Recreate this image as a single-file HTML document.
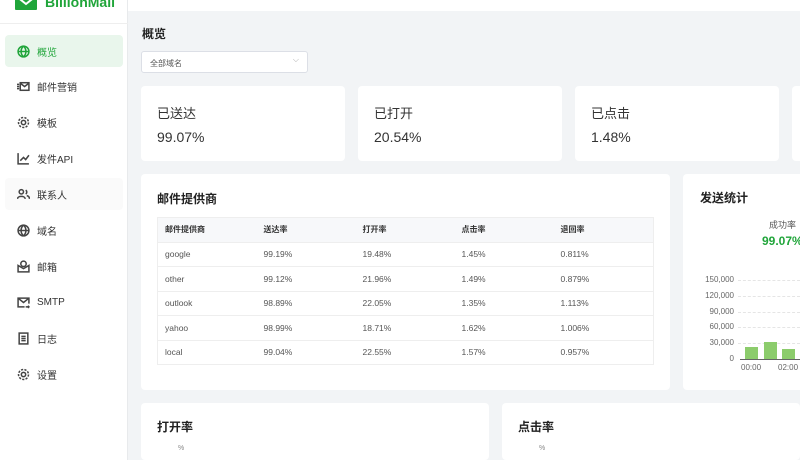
<!DOCTYPE html>
<html><head><meta charset="utf-8"><style>
*{box-sizing:border-box;margin:0;padding:0}
html,body{width:800px;height:460px;overflow:hidden}
body{background:#f2f4f6;font-family:"Liberation Sans","Noto Sans CJK SC",sans-serif;color:#333;position:relative}
.abs{position:absolute}
.side{left:0;top:0;width:128px;height:460px;background:#fff;border-right:1px solid #e8eaec}
.logo{left:15px;top:-6px;font-size:14px;font-weight:bold;color:#20a53a}
.nav{left:5px;width:118px;height:32px;border-radius:4px;font-size:10px;color:#333;display:flex;align-items:center;padding-left:12px}
.nav svg{width:13px;height:13px;margin-right:7px;stroke:#444;fill:none;stroke-width:1.4}
.card{background:#fff;border-radius:4px}
.t{font-size:12px;font-weight:bold;color:#222}
table{border-collapse:collapse;font-size:8.5px;color:#555}
td,th{text-align:left;height:24.5px;padding-left:7px;font-weight:normal;border-bottom:1px solid #eee}
th{background:#f7f8fa;color:#333;font-weight:bold;font-size:8px}
.yl{font-size:8px;color:#666;text-align:right;width:50px;left:684px}
.gl{left:738px;width:62px;border-top:1px dashed #e5e5e5}
</style></head><body>
<div class="abs" style="left:128px;top:0;width:672px;height:11px;background:#fff"></div>
<div class="abs side"></div>
<div class="abs" style="left:0;top:23px;width:128px;border-top:1px solid #eee"></div>
<svg class="abs" style="left:15px;top:-6px" width="22" height="16" viewBox="0 0 22 16"><rect x="0" y="0" width="22" height="16" rx="1" fill="#20a53a"/><path d="M1 2 L11 10 L21 2" stroke="#fff" stroke-width="2" fill="none"/></svg>
<div class="abs logo" style="left:45px">BillionMail</div>
<div class="abs nav" style="top:35px;background:#e9f6ec;color:#20a53a"><svg viewBox="0 0 12 12" style="stroke:#20a53a"><circle cx="6" cy="6" r="5"/><path d="M1 6h10M6 1c-3 3-3 7 0 10M6 1c3 3 3 7 0 10"/></svg>概览</div>
<div class="abs nav" style="top:70px"><svg viewBox="0 0 12 12"><rect x="3" y="2.5" width="8" height="7"/><path d="M3 3l4 3 4-3M0 4h2M0 6h2M0 8h2"/></svg>邮件营销</div>
<div class="abs nav" style="top:106px"><svg viewBox="0 0 12 12"><circle cx="6" cy="6" r="2"/><circle cx="6" cy="6" r="4.6" stroke-dasharray="2 1.2"/></svg>模板</div>
<div class="abs nav" style="top:142px"><svg viewBox="0 0 12 12"><path d="M1 1v10h10M3 8l3-3 2 2 3-4"/></svg>发件API</div>
<div class="abs nav" style="top:178px;background:#fafafa"><svg viewBox="0 0 12 12"><circle cx="4" cy="3.5" r="2"/><path d="M0.5 10c0-3 7-3 7 0M8 2a2 2 0 010 3.5M9 7c2 .5 2.5 1.5 2.5 3"/></svg>联系人</div>
<div class="abs nav" style="top:214px"><svg viewBox="0 0 12 12"><circle cx="6" cy="6" r="5"/><path d="M1 6h10M6 1c-3 3-3 7 0 10M6 1c3 3 3 7 0 10"/></svg>域名</div>
<div class="abs nav" style="top:250px"><svg viewBox="0 0 12 12"><path d="M1 5v6h10V5l-5 3z"/><circle cx="6" cy="3.5" r="2.5"/></svg>邮箱</div>
<div class="abs nav" style="top:286px"><svg viewBox="0 0 12 12"><path d="M7 10H1V2h10v5M1 2l5 4 5-4M8 10h3M10 9l1 1-1 1"/></svg>SMTP</div>
<div class="abs nav" style="top:322px"><svg viewBox="0 0 12 12"><rect x="2" y="1" width="8" height="10"/><path d="M4 4h4M4 6h4M4 8h4"/></svg>日志</div>
<div class="abs nav" style="top:358px"><svg viewBox="0 0 12 12"><circle cx="6" cy="6" r="2"/><circle cx="6" cy="6" r="4.6" stroke-dasharray="2 1.2"/></svg>设置</div>

<div class="abs t" style="left:142px;top:25px">概览</div>
<div class="abs" style="left:141px;top:51px;width:167px;height:22px;background:#fff;border:1px solid #dcdfe6;border-radius:3px;font-size:8px;color:#555;padding:6px 0 0 8px">全部域名<span class="abs" style="right:8px;top:3px;color:#aaa">⌵</span></div>

<div class="abs card" style="left:141px;top:86px;width:204px;height:75px"><div class="abs" style="left:16px;top:17px;font-size:13px">已送达</div><div class="abs" style="left:16px;top:43px;font-size:14px">99.07%</div></div>
<div class="abs card" style="left:358px;top:86px;width:204px;height:75px"><div class="abs" style="left:16px;top:17px;font-size:13px">已打开</div><div class="abs" style="left:16px;top:43px;font-size:14px">20.54%</div></div>
<div class="abs card" style="left:575px;top:86px;width:204px;height:75px"><div class="abs" style="left:16px;top:17px;font-size:13px">已点击</div><div class="abs" style="left:16px;top:43px;font-size:14px">1.48%</div></div>
<div class="abs card" style="left:792px;top:86px;width:20px;height:75px"></div>

<div class="abs card" style="left:141px;top:174px;width:529px;height:216px">
<div class="abs t" style="left:16px;top:16px">邮件提供商</div>
<table class="abs" style="left:16px;top:43px;width:497px;border:1px solid #eee">
<tr><th style="width:99px">邮件提供商</th><th style="width:99px">送达率</th><th style="width:99px">打开率</th><th style="width:99px">点击率</th><th>退回率</th></tr>
<tr><td>google</td><td>99.19%</td><td>19.48%</td><td>1.45%</td><td>0.811%</td></tr>
<tr><td>other</td><td>99.12%</td><td>21.96%</td><td>1.49%</td><td>0.879%</td></tr>
<tr><td>outlook</td><td>98.89%</td><td>22.05%</td><td>1.35%</td><td>1.113%</td></tr>
<tr><td>yahoo</td><td>98.99%</td><td>18.71%</td><td>1.62%</td><td>1.006%</td></tr>
<tr><td>local</td><td>99.04%</td><td>22.55%</td><td>1.57%</td><td>0.957%</td></tr>
</table></div>

<div class="abs card" style="left:683px;top:174px;width:130px;height:216px"></div>
<div class="abs t" style="left:700px;top:189px">发送统计</div>
<div class="abs" style="left:769px;top:218px;font-size:9px;color:#555">成功率</div>
<div class="abs" style="left:762px;top:234px;font-size:12px;font-weight:bold;color:#20a53a">99.07%</div>
<div class="abs yl" style="top:275px">150,000</div><div class="abs gl" style="top:280px"></div>
<div class="abs yl" style="top:291px">120,000</div><div class="abs gl" style="top:296px"></div>
<div class="abs yl" style="top:307px">90,000</div><div class="abs gl" style="top:312px"></div>
<div class="abs yl" style="top:322px">60,000</div><div class="abs gl" style="top:327px"></div>
<div class="abs yl" style="top:338px">30,000</div><div class="abs gl" style="top:343px"></div>
<div class="abs yl" style="top:354px">0</div>
<div class="abs" style="left:740px;top:359px;width:60px;border-top:1px solid #666"></div>
<div class="abs" style="left:745px;top:347px;width:13px;height:12px;background:#8ccc6c"></div>
<div class="abs" style="left:764px;top:342px;width:13px;height:17px;background:#8ccc6c"></div>
<div class="abs" style="left:782px;top:349px;width:13px;height:10px;background:#8ccc6c"></div>
<div class="abs" style="left:741px;top:363px;font-size:8px;color:#666">00:00</div>
<div class="abs" style="left:778px;top:363px;font-size:8px;color:#666">02:00</div>

<div class="abs card" style="left:141px;top:403px;width:348px;height:57px"><div class="abs t" style="left:16px;top:15px">打开率</div><div class="abs" style="left:37px;top:42px;font-size:7px;color:#888">%</div></div>
<div class="abs card" style="left:502px;top:403px;width:298px;height:57px"><div class="abs t" style="left:16px;top:15px">点击率</div><div class="abs" style="left:37px;top:42px;font-size:7px;color:#888">%</div></div>
</body></html>
